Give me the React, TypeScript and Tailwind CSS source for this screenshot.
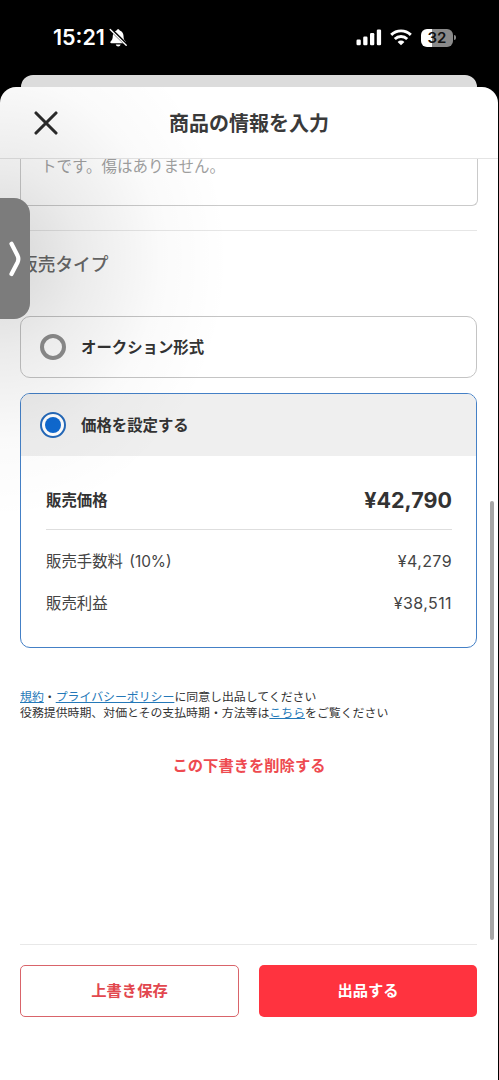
import type { ReactNode } from "react";
import { clsx } from "clsx";

const FEES = [
  { label: "販売手数料 (10%)", value: "¥4,279" },
  { label: "販売利益", value: "¥38,511" },
];

function BellOffIcon() {
  return (
    <svg width="19" height="20" viewBox="0 0 19 20" className="shrink-0">
      <path
        d="M9.2 1.2c-.9 0-1.5.6-1.6 1.4C5.1 3.3 3.9 5.3 3.8 7.7c-.1 3-.6 4.2-2 5.5-.5.5-.6.9-.5 1.3.1.5.5.7 1.1.7h13.4c.6 0 1-.2 1.1-.7.1-.4 0-.8-.5-1.3-1.4-1.3-1.8-2.5-1.9-5.5-.1-2.4-1.4-4.4-3.8-5.1-.1-.8-.7-1.4-1.5-1.4z"
        fill="#fff"
      />
      <path d="M6.8 16.4c.3 1.2 1.2 2 2.4 2s2.1-.8 2.4-2z" fill="#fff" />
      <path d="M1.8 1.4 18 17.2" stroke="#000" strokeWidth="3.2" />
      <path d="M1.2 1.6 17.2 17.3" stroke="#fff" strokeWidth="1.4" strokeLinecap="round" />
    </svg>
  );
}

function SignalIcon() {
  return (
    <svg width="26" height="17" viewBox="0 0 26 17" fill="#fff">
      <rect x="0.5" y="10.5" width="4.3" height="5.7" rx="1.2" />
      <rect x="7.2" y="7.5" width="4.3" height="8.7" rx="1.2" />
      <rect x="14" y="4" width="4.3" height="12.2" rx="1.2" />
      <rect x="20.8" y="0.5" width="4.3" height="15.7" rx="1.2" />
    </svg>
  );
}

function WifiIcon() {
  return (
    <svg width="22" height="17" viewBox="0 0 22 17" fill="none" stroke="#fff" strokeWidth="2.9">
      <path d="M1.2 5.9a14 14 0 0 1 19.6 0" />
      <path d="M4.8 10a8.9 8.9 0 0 1 12.4 0" />
      <path d="M11 16.2 7.6 12.9a4.9 4.9 0 0 1 6.8 0z" fill="#fff" stroke="none" />
    </svg>
  );
}

function Battery() {
  return (
    <div className="flex items-center gap-px">
      <div className="flex h-[18px] w-8 items-center justify-center rounded-[6px] bg-[linear-gradient(90deg,#fff_33%,#8a8a8a_33%)] font-['Inter',sans-serif] text-[15px] leading-none font-semibold text-[#111]">
        32
      </div>
      <div className="h-[5px] w-[2px] rounded-r-full bg-[#8a8a8a]" />
    </div>
  );
}

function StatusBar() {
  return (
    <div className="flex h-[75px] items-start justify-between pt-[28px] pr-[43px] pl-[53px] text-white">
      <div className="flex h-[19px] items-center gap-[3px]">
        <span className="w-[53px] font-['Inter',sans-serif] text-[21.5px] leading-none font-semibold whitespace-nowrap">
          15:21
        </span>
        <BellOffIcon />
      </div>
      <div className="flex h-[19px] items-center">
        <SignalIcon />
        <div className="ml-[8px] flex">
          <WifiIcon />
        </div>
        <div className="ml-[9px]">
          <Battery />
        </div>
      </div>
    </div>
  );
}

function Radio({ checked }: { checked?: boolean }) {
  return (
    <span
      className={clsx(
        "flex size-[26px] shrink-0 items-center justify-center rounded-full",
        checked ? "border-[2px] border-[#2569b9] bg-white" : "border-[4px] border-[#8f8f8f]"
      )}
    >
      {checked && <span className="size-4 rounded-full bg-[#0f69d0]" />}
    </span>
  );
}

function TextLink({ children }: { children: ReactNode }) {
  return (
    <a href="#" className="text-[#2478b8] underline underline-offset-1">
      {children}
    </a>
  );
}

export default function App() {
  return (
    <div className="relative h-[1080px] w-[499px] overflow-hidden bg-black font-['Noto_Sans_CJK_JP',sans-serif] text-[#333]">
      <StatusBar />
      <div className="mr-[22px] ml-[21px] h-3 rounded-t-[12px] bg-[#dcdcdc]" />

      <div className="flex h-[993px] w-[498px] flex-col overflow-hidden rounded-t-[16px] bg-white">
        <header className="relative flex h-[72px] shrink-0 items-center justify-center border-b border-[#e4e4e4]">
          <button className="absolute top-[24px] left-[34px]" aria-label="閉じる">
            <svg width="24" height="24" viewBox="0 0 24 24" fill="none" stroke="#2b2b2b" strokeWidth="3.1" strokeLinecap="round">
              <path d="M2 2l20 20M22 2 2 22" />
            </svg>
          </button>
          <h1 className="text-[20px] leading-none font-bold text-[#3a3a3a]">商品の情報を入力</h1>
        </header>

        <main className="h-[785px] shrink-0 px-5">
          <div className="h-[47px] w-[458px] rounded-b-[6px] border border-t-0 border-[#cacaca] pl-5 text-[15.5px] leading-[12px] text-[#9f9f9f]">
            トです。傷はありません。
          </div>

          <section className="mt-6 w-[457px] border-t border-[#e6e6e6] pt-[22px]">
            <h2 className="text-[17.7px] leading-[20px] font-medium text-[#6a6a6a]">販売タイプ</h2>

            <div className="mt-[43px] flex h-[62px] items-center gap-[15px] rounded-[10px] border border-[#c4c4c4] pl-[19px]">
              <Radio />
              <span className="text-[15.4px] leading-none font-bold">オークション形式</span>
            </div>

            <div className="mt-[15px] h-[255px] overflow-hidden rounded-[10px] border-[1.5px] border-[#4480c6]">
              <div className="flex h-[62px] items-center gap-[15px] bg-[#efefef] pl-[19px]">
                <Radio checked />
                <span className="text-[15.4px] leading-none font-bold">価格を設定する</span>
              </div>
              <div className="pr-6 pl-[25px]">
                <div className="mt-[15px] flex h-[59px] items-center justify-between border-b border-[#dedede]">
                  <span className="text-[15.4px] leading-none font-bold">販売価格</span>
                  <span className="pt-[2px] font-['Inter',sans-serif] text-[21.5px] leading-none font-bold">¥42,790</span>
                </div>
                <dl className="mt-[10px] text-[#444]">
                  {FEES.map((fee) => (
                    <div key={fee.label} className="flex h-[42px] items-center justify-between">
                      <dt className="pt-px font-['Inter','Noto_Sans_CJK_JP',sans-serif] text-[15.4px] leading-none [word-spacing:2px]">
                        {fee.label}
                      </dt>
                      <dd className="font-['Inter',sans-serif] text-[16px] leading-none tracking-[0.4px]">{fee.value}</dd>
                    </div>
                  ))}
                </dl>
              </div>
            </div>
          </section>

          <p className="mt-10 text-[11.9px] leading-[15.5px]">
            <TextLink>規約</TextLink>・<TextLink>プライバシーポリシー</TextLink>に同意し出品してください
            <br />
            役務提供時期、対価とその支払時期・方法等は<TextLink>こちら</TextLink>をご覧ください
          </p>

          <button className="mx-auto mt-[35px] block text-[15.3px] leading-[20px] font-bold text-[#ee4a50]">
            この下書きを削除する
          </button>
        </main>

        <footer className="mx-5 flex w-[457px] gap-5 border-t border-[#e8e8e8] pt-5 text-[15.3px] leading-none font-bold">
          <button className="h-[52px] w-[219px] rounded-[5px] border-[1.5px] border-[#d9646a] pb-[3px] text-[#e2474e]">
            上書き保存
          </button>
          <button className="h-[52px] w-[218px] rounded-[5px] bg-[#ff333f] pb-[3px] text-white">出品する</button>
        </footer>
      </div>

      {/* soft shade around the pulled-out side handle */}
      <div className="pointer-events-none absolute top-[87px] left-0 h-[450px] w-[260px] rounded-tl-[16px] bg-[radial-gradient(ellipse_230px_260px_at_0px_172px,rgba(0,0,0,0.16)_0%,rgba(0,0,0,0.08)_35%,rgba(0,0,0,0.02)_70%,transparent_100%)]" />
      <div className="absolute top-[198px] left-0 flex h-[121px] w-[30px] items-center justify-end rounded-r-[16px] bg-[#7c7c7c] pr-[9px]">
        <svg width="14" height="36" viewBox="0 0 14 36" fill="none" stroke="#fff" strokeWidth="4.2" strokeLinecap="round" strokeLinejoin="round">
          <path d="M4.5 2.8 10.5 14.5Q12.2 18 10.5 21.5L4.500 33" />
        </svg>
      </div>

      <div className="absolute top-[501px] left-[490px] h-[439px] w-1 rounded-full bg-[#a6a6a6]" />
    </div>
  );
}
